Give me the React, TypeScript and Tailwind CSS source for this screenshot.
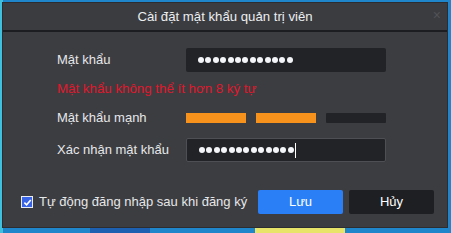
import React from "react";

const Dots = ({ n }: { n: number }) => (
  <div className="flex items-center gap-[1.4px]">
    {Array.from({ length: n }).map((_, i) => (
      <span key={i} className="block w-[6px] h-[6px] rounded-full bg-[#f2f4f8]" />
    ))}
  </div>
);

export default function App() {
  return (
    <div
      className="w-[451px] h-[233px] bg-[#1f86cc] relative overflow-hidden"
      style={{ fontFamily: '"Liberation Sans", Arial, sans-serif' }}
    >
      <div className="absolute left-0 top-0 w-[3px] h-full bg-[#3fc0dc]" />
      <div className="absolute left-[90px] bottom-0 w-[60px] h-[5px] bg-[#1d5fb0]" />
      <div className="absolute left-[255px] bottom-0 w-[90px] h-[5px] bg-[#e8e46a]" />
      <div className="relative ml-[2px] mt-[2px] w-[446px] h-[226px] bg-[#3c3d41] border border-[#2c2d30] flex flex-col">
        <div className="h-[27px] flex items-center justify-center relative bg-[#3b3c40]">
          <span className="text-[13.2px] text-[#eceef0]">Cài đặt mật khẩu quản trị viên</span>
          <span className="absolute right-[6px] top-[5px] text-[14px] text-[#505256] leading-none">×</span>
        </div>
        <div className="h-[2px] bg-[#1c1d20]" />
        <div className="flex flex-col pl-[54px] pt-[16px]">
          <div className="flex items-center h-[24px]">
            <span className="w-[129px] text-[13px] text-[#e6e7e9]">Mật khẩu</span>
            <div className="w-[200px] h-[24px] bg-[#222327] rounded-[2px] flex items-center pl-[12px]">
              <Dots n={13} />
            </div>
          </div>
          <div className="mt-[9px] h-[16px] text-[13.3px] leading-[16px] text-[#e0172c]">
            Mật khẩu không thể ít hơn 8 ký tự
          </div>
          <div className="mt-[13px] flex items-center h-[16px]">
            <span className="w-[129px] text-[13px] text-[#e6e7e9]">Mật khẩu mạnh</span>
            <div className="flex gap-[10px]">
              <div className="w-[60px] h-[10px] bg-[#f7931d]" />
              <div className="w-[60px] h-[10px] bg-[#f7931d]" />
              <div className="w-[60px] h-[10px] bg-[#222327] rounded-[1px]" />
            </div>
          </div>
          <div className="mt-[12px] flex items-center h-[24px]">
            <span className="w-[129px] text-[13px] text-[#e6e7e9]">Xác nhận mật khẩu</span>
            <div className="w-[200px] h-[24px] bg-[#222327] border border-[#4e4f54] rounded-[2px] flex items-center pl-[12px]">
              <Dots n={13} />
              <span className="block w-[1px] h-[15px] bg-white ml-[1px]" />
            </div>
          </div>
        </div>
        <div className="mt-[28px] flex items-center h-[24px] pl-[18px]">
          <span className="w-[12px] h-[12px] bg-[#e9ecf2] flex items-center justify-center">
            <span className="w-[10px] h-[10px] bg-[#3a64e6] flex items-center justify-center">
              <svg width="9" height="9" viewBox="0 0 10 10">
                <path d="M1.5 5.2 L4 7.6 L8.6 2.2" stroke="#ffffff" strokeWidth="1.8" fill="none" />
              </svg>
            </span>
          </span>
          <span className="ml-[6px] text-[13px] text-[#e6e7e9]">Tự động đăng nhập sau khi đăng ký</span>
          <div className="ml-auto mr-[13px] flex gap-[6px]">
            <button className="w-[85px] h-[24px] bg-[#2a7ff7] rounded-[2px] text-[13px] text-white">Lưu</button>
            <button className="w-[85px] h-[24px] bg-[#1e1f23] rounded-[2px] text-[13px] text-white">Hủy</button>
          </div>
        </div>
      </div>
    </div>
  );
}
